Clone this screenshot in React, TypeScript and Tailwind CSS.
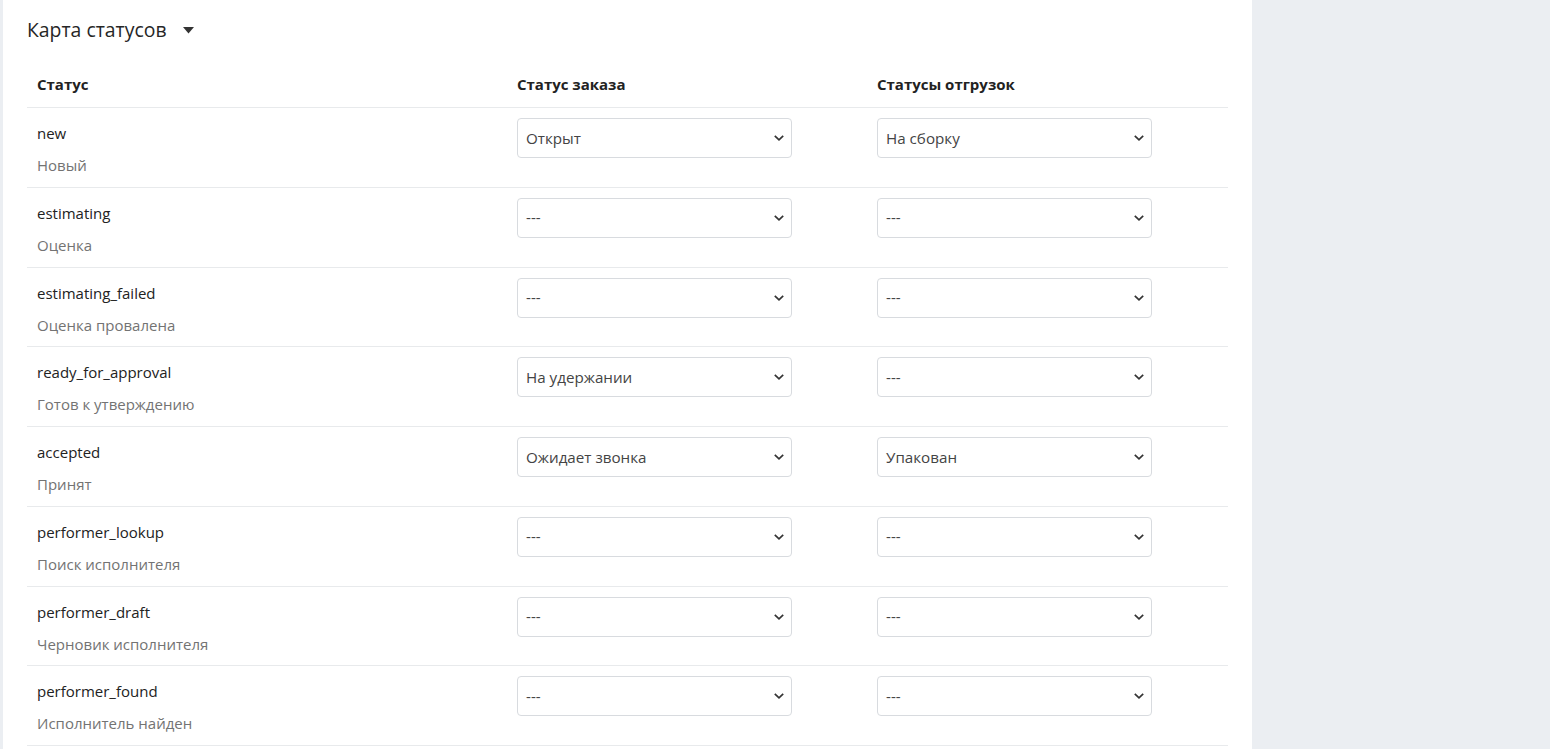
import React from "react";

const rows: [string, string, string, string][] = [
  ["new", "Новый", "Открыт", "На сборку"],
  ["estimating", "Оценка", "---", "---"],
  ["estimating_failed", "Оценка провалена", "---", "---"],
  ["ready_for_approval", "Готов к утверждению", "На удержании", "---"],
  ["accepted", "Принят", "Ожидает звонка", "Упакован"],
  ["performer_lookup", "Поиск исполнителя", "---", "---"],
  ["performer_draft", "Черновик исполнителя", "---", "---"],
  ["performer_found", "Исполнитель найден", "---", "---"],
];

function Select({ value }: { value: string }) {
  return (
    <div className="flex h-[40px] w-[275px] items-center justify-between rounded-[4px] border border-[#d8dbdf] bg-white pl-[8px] pr-[6px] text-[15.2px] text-[#444]">
      <span>{value}</span>
      <svg width="12" height="8" viewBox="0 0 12 8" fill="none">
        <path d="M1.8 1.8 L6 5.8 L10.2 1.8" stroke="#333" strokeWidth="1.7" />
      </svg>
    </div>
  );
}

export default function App() {
  return (
    <div
      className="flex h-[749px] overflow-hidden bg-[#ebeef2]"
      style={{ fontFamily: '"Open Sans", sans-serif' }}
    >
      <div className="ml-[3px] w-[1249px] bg-white pl-[24px] pr-[24px]">
        <div className="flex h-[61px] items-center pb-[1px] text-[19.4px] text-[#262626]">
          <span>Карта статусов</span>
          <svg className="ml-[16px]" width="11" height="7" viewBox="0 0 11 7">
            <path d="M0 0 L11 0 L5.5 6.5 Z" fill="#333" />
          </svg>
        </div>
        <div className="flex h-[47px] items-center border-b border-[#e8eaec] text-[15px] font-bold text-[#222]">
          <div className="w-[480px] pl-[10px]">Статус</div>
          <div className="w-[360px] pl-[10px]">Статус заказа</div>
          <div className="pl-[10px]">Статусы отгрузок</div>
        </div>
        {rows.map((r) => (
          <div
            key={r[0]}
            className="flex h-[79.75px] border-b border-[#e8eaec] pt-[10px] text-[15px]"
          >
            <div className="w-[480px] pl-[10px]">
              <div className="mt-[5px] leading-[20px] text-[#222]">{r[0]}</div>
              <div className="mt-[12px] leading-[20px] text-[#737373]">{r[1]}</div>
            </div>
            <div className="w-[360px] pl-[10px]">
              <Select value={r[2]} />
            </div>
            <div className="pl-[10px]">
              <Select value={r[3]} />
            </div>
          </div>
        ))}
      </div>
    </div>
  );
}
